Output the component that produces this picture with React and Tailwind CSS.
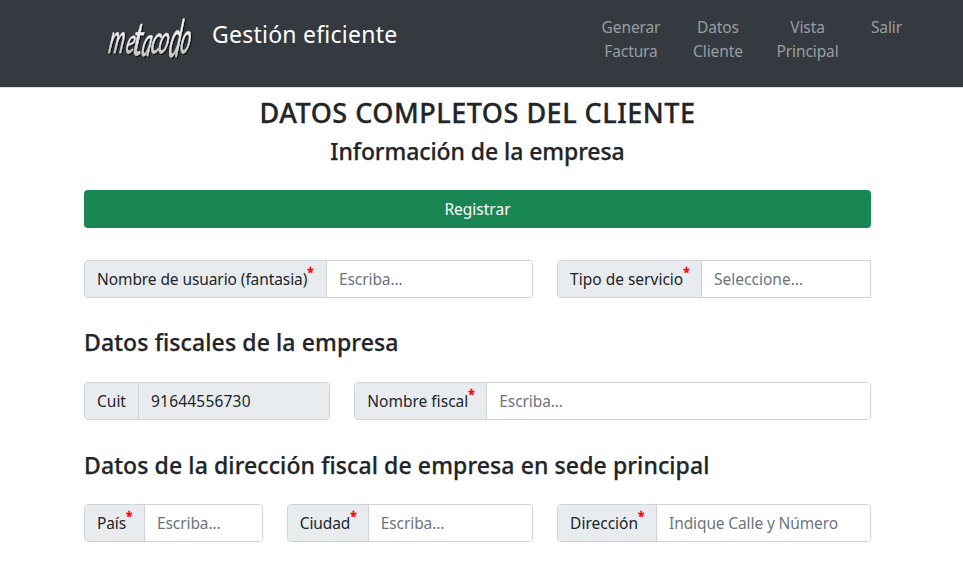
const navItems = [
  { lines: ['Generar', 'Factura'], box: 'w-[90px]' },
  { lines: ['Datos', 'Cliente'], box: 'w-[84px]' },
  { lines: ['Vista', 'Principal'], box: 'w-[95px]' },
  { lines: ['Salir'], box: 'w-[63px]' },
];

function Logo() {
  return (
    <svg width="100" height="60" viewBox="0 0 100 60" overflow="visible" className="shrink-0" aria-label="metacodo">
      <defs>
        <linearGradient id="silver" x1="0" y1="0" x2="0" y2="1">
          <stop offset="0" stopColor="#ffffff" />
          <stop offset="0.6" stopColor="#e6e6e6" />
          <stop offset="1" stopColor="#a4a4a4" />
        </linearGradient>
        <filter id="drop" x="-10%" y="-10%" width="130%" height="130%">
          <feDropShadow dx="1.2" dy="1.2" stdDeviation="0.5" floodColor="#000" floodOpacity="0.8" />
        </filter>
      </defs>
      <g fill="url(#silver)" stroke="#dedede" strokeWidth="0.4" filter="url(#drop)" fontFamily="Lato, sans-serif" fontStyle="italic">
        <text transform="translate(7.5 43) skewX(-10) scale(.56 1.15)" fontSize="35">m</text>
        <text transform="translate(24.5 43) skewX(-12) scale(.56 1.02)" fontSize="33">e</text>
        <text transform="translate(31.5 45) skewX(-8) scale(.8 1.28)" fontSize="36">t</text>
        <text transform="translate(40.5 46) skewX(-10) scale(.56 1.22)" fontSize="33">a</text>
        <text transform="translate(49.5 43) skewX(-12) scale(.62 1.15)" fontSize="33">c</text>
        <text transform="translate(57 43) skewX(-12) scale(.58 1.18)" fontSize="33">o</text>
        <text transform="translate(67.5 47) skewX(-9) scale(.54 1.3)" fontSize="40">d</text>
        <text transform="translate(79 43) skewX(-10) scale(.56 1.25)" fontSize="34">o</text>
      </g>
    </svg>
  );
}

function Field({ label, labelClass, text, textClass = 'text-[#6c757d]', span, required = true, square = false, filled = false }) {
  return (
    <div className={`${span} flex h-[38px] overflow-hidden border border-[#ced4da] ${square ? 'rounded-l' : 'rounded'}`}>
      <div className={`${labelClass} flex shrink-0 items-center whitespace-nowrap border-r border-[#ced4da] bg-[#e9ecef] pl-3`}>
        <span>{label}</span>
        {required && <sup className="top-[-6px] text-[12px] font-bold leading-none tracking-normal text-[#ff0000] [-webkit-text-stroke:0.3px_#ff0000]">*</sup>}
      </div>
      <div className={`flex flex-1 items-center whitespace-nowrap pl-3 ${filled ? 'bg-[#e9ecef]' : 'bg-white'} ${textClass}`}>
        {text}
      </div>
    </div>
  );
}

export default function App() {
  return (
    <div className="h-[577px] overflow-hidden bg-white font-['Noto_Sans',sans-serif] text-[15.5px] leading-6 text-[#212529]">
      <header className="flex h-[88px] items-start border-b border-[#dcdddf] bg-[#343a40] pl-[100px]">
        <div className="mt-[10px] flex">
          <Logo />
        </div>
        <div className="ml-[12px] mt-[16px] whitespace-nowrap text-[23px] leading-9 tracking-[0.24px] text-white">Gestión eficiente</div>
        <nav className="ml-auto mr-[45px] mt-[15px] flex text-center tracking-[-0.1px] text-[#9a9da0]">
          {navItems.map((item) => (
            <a key={item.lines[0]} className={item.box}>
              {item.lines.map((line) => (
                <span key={line} className="block">{line}</span>
              ))}
            </a>
          ))}
        </nav>
      </header>
      <main className="ml-[84px] w-[787px]">
        <h1 className="mt-2 text-center text-[27px] font-medium leading-[34px] tracking-[0.5px] [-webkit-text-stroke:0.3px_#212529]">DATOS COMPLETOS DEL CLIENTE</h1>
        <h2 className="mt-[7px] text-center text-[23px] font-medium leading-[29px] tracking-[-0.08px] [-webkit-text-stroke:0.25px_#212529]">Información de la empresa</h2>
        <button className="mt-6 block h-[38px] w-full rounded bg-[#198754] text-white">Registrar</button>
        <div className="mt-8 grid grid-cols-12 gap-x-6">
          <Field span="col-span-7" label="Nombre de usuario (fantasia)" labelClass="w-[242px] tracking-[-0.09px]" text="Escriba..." textClass="text-[#6c757d] tracking-[-0.1px]" />
          <Field span="col-span-5" label="Tipo de servicio" labelClass="w-[144px]" text="Seleccione..." square />
        </div>
        <h2 className="mt-[30px] text-[23px] font-medium leading-[29px] tracking-[0.11px] [-webkit-text-stroke:0.25px_#212529]">Datos fiscales de la empresa</h2>
        <div className="mt-[25px] grid grid-cols-12 gap-x-6">
          <Field span="col-span-4" label="Cuit" labelClass="w-[54px]" text="91644556730" textClass="text-[#212529] tracking-[0.2px]" required={false} filled />
          <Field span="col-span-8" label="Nombre fiscal" labelClass="w-[132px]" text="Escriba..." textClass="text-[#6c757d] tracking-[-0.1px]" />
        </div>
        <h2 className="mt-[31px] text-[23px] font-medium leading-[29px] tracking-[0.1px] [-webkit-text-stroke:0.25px_#212529]">Datos de la dirección fiscal de empresa en sede principal</h2>
        <div className="mt-6 grid grid-cols-12 gap-x-6">
          <Field span="col-span-3" label="País" labelClass="w-[60px] tracking-[-0.1px]" text="Escriba..." textClass="text-[#6c757d] tracking-[-0.1px]" />
          <Field span="col-span-4" label="Ciudad" labelClass="w-[81px] tracking-[-0.1px]" text="Escriba..." textClass="text-[#6c757d] tracking-[-0.1px]" />
          <Field span="col-span-5" label="Dirección" labelClass="w-[99px]" text="Indique Calle y Número" textClass="text-[#6c757d] tracking-[-0.12px]" />
        </div>
      </main>
    </div>
  );
}
